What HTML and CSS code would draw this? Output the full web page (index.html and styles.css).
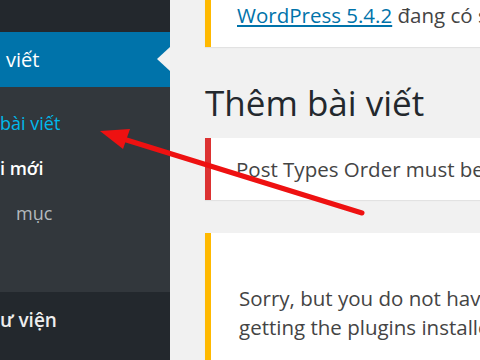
FILE: index.html
```html
<!DOCTYPE html>
<html lang="vi">
<head>
<meta charset="utf-8">
<title>Thêm bài viết</title>
<link rel="stylesheet" href="styles.css">
</head>
<body>
<div class="wrap">
  <aside class="sidebar">
    <div class="menu-top"></div>
    <div class="menu-current"><span class="menu-label">viết</span></div>
    <ul class="submenu">
      <li class="sub sub-hover"><span class="lbl-all">bài viết</span></li>
      <li class="sub sub-current"><span class="lbl-new">i mới</span></li>
      <li class="sub"><span class="lbl-cat">mục</span></li>
      <li class="sub"></li>
    </ul>
    <div class="menu-item"><span class="lbl-lib">ư viện</span></div>
  </aside>
  <main class="content">
    <div class="notice notice-warning notice-top">
      <p><a href="#">WordPress 5.4.2</a> đang có sẵn! Vui lòng cập nhật.</p>
    </div>
    <h1 class="page-title">Thêm bài viết</h1>
    <div class="notice notice-error notice-pto">
      <p>Post Types Order must be updated to latest version.</p>
    </div>
    <div class="notice notice-warning notice-sorry">
      <p>Sorry, but you do not have permissions to install plugins.<br>getting the plugins installed.</p>
    </div>
  </main>
</div>
<svg class="annotation" width="480" height="360" viewBox="0 0 480 360">
  <line x1="362" y1="213" x2="120" y2="138" stroke="#ee1111" stroke-width="5" stroke-linecap="round"/>
  <polygon points="100,131 123,149 130,129" fill="#ee1111"/>
</svg>
</body>
</html>
```
FILE: styles.css
```css
* { box-sizing: border-box; }
html, body {
  margin: 0;
  padding: 0;
  width: 480px;
  height: 360px;
  overflow: hidden;
  font-family: "Open Sans", "Noto Sans", sans-serif;
}
body { position: relative; }
.wrap {
  display: flex;
  height: 360px;
}
.sidebar {
  width: 170px;
  flex: none;
  background: #23282d;
  display: flex;
  flex-direction: column;
  overflow: hidden;
}
.menu-top { height: 32px; }
.menu-current {
  height: 55px;
  background: #0073aa;
  color: #fff;
  font-size: 20px;
  display: flex;
  align-items: center;
  padding-left: 6px;
  position: relative;
  white-space: nowrap;
}
.menu-current::after {
  content: "";
  position: absolute;
  right: 0;
  top: 15px;
  border-right: 13px solid #f1f1f1;
  border-top: 12px solid transparent;
  border-bottom: 12px solid transparent;
}
.submenu {
  list-style: none;
  margin: 0;
  padding: 13px 0 12px;
  background: #32373c;
}
.sub {
  height: 45px;
  display: flex;
  align-items: center;
  font-size: 18px;
  color: #b4b9be;
  white-space: nowrap;
}
.sub-hover { color: #00b9eb; }
.sub-current { color: #fff; font-weight: 600; }
.lbl-all { margin-left: 0; }
.lbl-new { margin-left: 0; }
.lbl-cat { margin-left: 16px; }
.menu-item {
  height: 56px;
  display: flex;
  align-items: center;
  color: #eee;
  font-size: 19px;
  font-weight: 600;
  white-space: nowrap;
}
.content {
  flex: 1;
  background: #f1f1f1;
  padding-left: 35px;
  overflow: hidden;
  color: #444;
}
.notice {
  background: #fff;
  box-shadow: 0 1px 1px rgba(0,0,0,0.06);
  border-left: 6px solid #ffb900;
  padding-left: 25px;
  white-space: nowrap;
  font-size: 20.5px;
}
.notice p { margin: 0; }
.notice-top {
  height: 47px;
  padding-left: 26px;
}
.notice-top p { line-height: 30px; }
.notice-top a {
  color: #0073aa;
  text-decoration: underline;
}
.page-title {
  margin: 34px 0 13px;
  font-size: 35px;
  font-weight: 400;
  line-height: 44px;
  color: #23282d;
  white-space: nowrap;
}
.notice-error {
  border-left-color: #dc3232;
  height: 62px;
  display: flex;
  align-items: center;
}
.notice-sorry {
  margin-top: 33px;
  height: 200px;
  padding-top: 51px;
  padding-left: 28px;
}
.notice-sorry p { line-height: 29px; }
.annotation {
  position: absolute;
  left: 0;
  top: 0;
  pointer-events: none;
}
```
